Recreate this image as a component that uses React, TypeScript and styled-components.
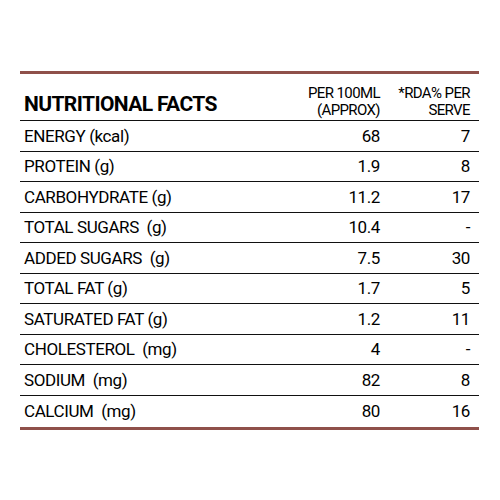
import React from "react";
import styled, { createGlobalStyle } from "styled-components";

const Global = createGlobalStyle`
  body {
    margin: 0;
    background: #fff;
    font-family: Roboto, "Liberation Sans", sans-serif;
    color: #000;
  }
`;

const s = {
  Page: styled.div`
    width: 459px;
    margin-left: 20px;
    padding-top: 61px;
  `,
  Clipped: styled.div`
    height: 2px;
    overflow: hidden;
    padding-left: 2px;
  `,
  ClippedText: styled.div`
    font-size: 11px;
    line-height: 11px;
    margin-top: -9px;
    letter-spacing: 0.6px;
    color: #222;
    white-space: nowrap;
  `,
  Rule: styled.div`
    height: 3px;
    background: #8f504a;
  `,
  TopRule: styled.div`
    height: 3px;
    margin-top: 8px;
    background: #8f504a;
  `,
  Table: styled.div`
    display: grid;
    grid-template-columns: 1fr 100px 90px;
    padding: 0 9px 0 4px;
  `,
  Title: styled.div`
    height: 47px;
    box-sizing: border-box;
    display: flex;
    align-items: flex-end;
    padding: 0 0 4px 4px;
    margin-left: -4px;
    font-size: 21px;
    font-weight: 700;
    letter-spacing: -0.6px;
    border-bottom: 1px solid #111;
  `,
  HeadCell: styled.div<{ $edge?: boolean }>`
    height: 47px;
    box-sizing: border-box;
    display: flex;
    flex-direction: column;
    justify-content: flex-end;
    align-items: flex-end;
    text-align: right;
    padding-bottom: 1px;
    font-size: 15px;
    line-height: 17px;
    letter-spacing: -0.6px;
    border-bottom: 1px solid #111;
    margin-right: ${(p) => (p.$edge ? "-9px" : "0")};
    padding-right: ${(p) => (p.$edge ? "9px" : "0")};
  `,
  Cell: styled.div<{ $right?: boolean; $last?: boolean; $edge?: "l" | "r" }>`
    height: ${(p) => (p.$last ? "31.5px" : "29.5px")};
    display: flex;
    align-items: center;
    justify-content: ${(p) => (p.$right ? "flex-end" : "flex-start")};
    font-size: 17px;
    letter-spacing: -0.4px;
    border-bottom: ${(p) => (p.$last ? "none" : "1px solid #111")};
    margin-left: ${(p) => (p.$edge === "l" ? "-4px" : "0")};
    padding-left: ${(p) => (p.$edge === "l" ? "4px" : "0")};
    margin-right: ${(p) => (p.$edge === "r" ? "-9px" : "0")};
    padding-right: ${(p) => (p.$edge === "r" ? "9px" : "0")};
    white-space: pre;
  `,
};

const rows: [string, string, string][] = [
  ["ENERGY (kcal)", "68", "7"],
  ["PROTEIN (g)", "1.9", "8"],
  ["CARBOHYDRATE (g)", "11.2", "17"],
  ["TOTAL SUGARS  (g)", "10.4", "-"],
  ["ADDED SUGARS  (g)", "7.5", "30"],
  ["TOTAL FAT (g)", "1.7", "5"],
  ["SATURATED FAT (g)", "1.2", "11"],
  ["CHOLESTEROL  (mg)", "4", "-"],
  ["SODIUM  (mg)", "82", "8"],
  ["CALCIUM  (mg)", "80", "16"],
];

const App: React.FC = () => {
  return (
    <>
      <Global />
      <s.Page>
        <s.Clipped>
          <s.ClippedText>FROM CONTAINS ADDED FLAVOURS</s.ClippedText>
        </s.Clipped>
        <s.TopRule />
        <s.Table>
          <s.Title>NUTRITIONAL FACTS</s.Title>
          <s.HeadCell>
            <span>PER 100ML</span>
            <span>(APPROX)</span>
          </s.HeadCell>
          <s.HeadCell $edge>
            <span>*RDA% PER</span>
            <span>SERVE</span>
          </s.HeadCell>
          {rows.map(([label, per, rda], i) => {
            const last = i === rows.length - 1;
            return (
              <React.Fragment key={label}>
                <s.Cell $last={last} $edge="l">{label}</s.Cell>
                <s.Cell $last={last} $right>{per}</s.Cell>
                <s.Cell $last={last} $right $edge="r">{rda}</s.Cell>
              </React.Fragment>
            );
          })}
        </s.Table>
        <s.Rule />
      </s.Page>
    </>
  );
};

export default App;
